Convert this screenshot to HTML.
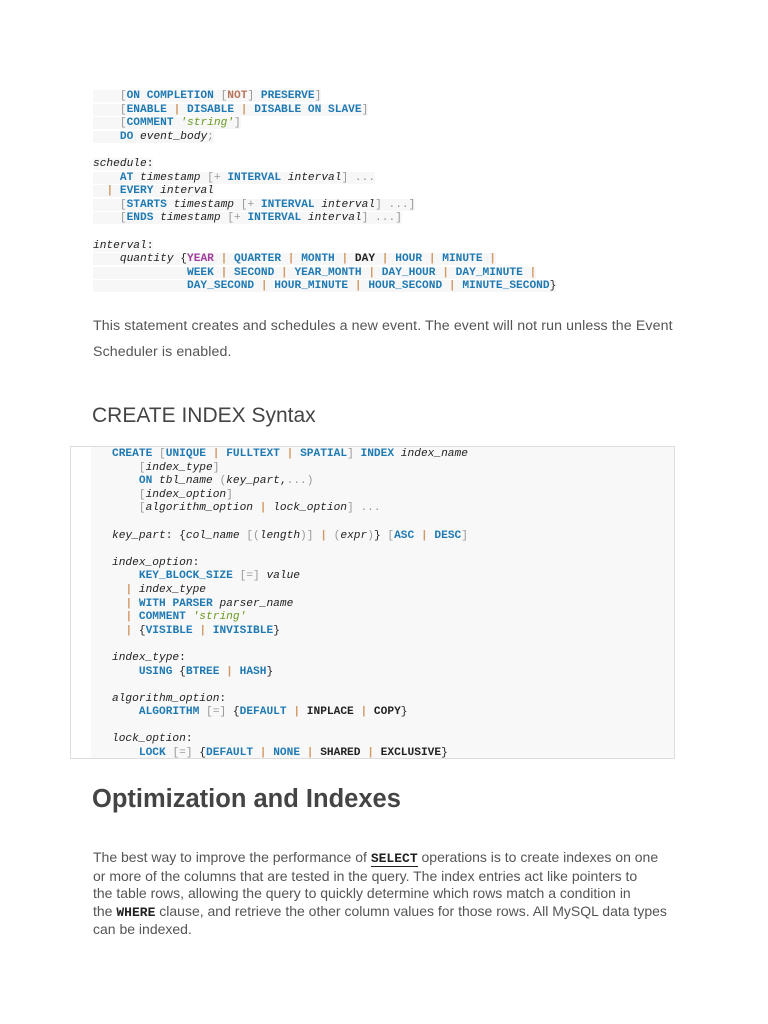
<!DOCTYPE html>
<html><head><meta charset="utf-8"><style>
body{margin:0;background:#fff;width:768px;height:1024px;position:relative;overflow:hidden;font-family:"Liberation Sans",sans-serif;}
pre{margin:0;position:absolute;font-family:"Liberation Mono",monospace;font-size:11.2px;line-height:13.6px;color:#222;}
.b1 span.l{background:#f7f7f7;}
.k{color:#1f7ab3;font-weight:bold}
.g{color:#999}
.p{color:#d19a66;font-weight:bold}
.s{color:#6a9a1f;font-style:italic}
.pu{color:#a03c9c;font-weight:bold}
.n{color:#b7765a;font-weight:bold}
.i{font-style:italic;color:#222}
.d{color:#222;font-weight:bold}
.t{position:absolute;left:93px;color:#555;font-size:14.2px;white-space:nowrap;letter-spacing:0.1px}
</style></head><body>
<pre class="b1" style="left:93px;top:90px"><span class="l">    <span class="g">[</span><span class="k">ON COMPLETION</span> <span class="g">[</span><span class="n">NOT</span><span class="g">]</span> <span class="k">PRESERVE</span><span class="g">]</span></span>
<span class="l">    <span class="g">[</span><span class="k">ENABLE</span> <span class="p">|</span> <span class="k">DISABLE</span> <span class="p">|</span> <span class="k">DISABLE ON SLAVE</span><span class="g">]</span></span>
<span class="l">    <span class="g">[</span><span class="k">COMMENT</span> <span class="s">'string'</span><span class="g">]</span></span>
<span class="l">    <span class="k">DO</span> <span class="i">event_body</span><span class="g">;</span></span>

<span class="l"><span class="i">schedule</span>:</span>
<span class="l">    <span class="k">AT</span> <span class="i">timestamp</span> <span class="g">[+</span> <span class="k">INTERVAL</span> <span class="i">interval</span><span class="g">] ...</span></span>
<span class="l">  <span class="p">|</span> <span class="k">EVERY</span> <span class="i">interval</span></span>
<span class="l">    <span class="g">[</span><span class="k">STARTS</span> <span class="i">timestamp</span> <span class="g">[+</span> <span class="k">INTERVAL</span> <span class="i">interval</span><span class="g">] ...]</span></span>
<span class="l">    <span class="g">[</span><span class="k">ENDS</span> <span class="i">timestamp</span> <span class="g">[+</span> <span class="k">INTERVAL</span> <span class="i">interval</span><span class="g">] ...]</span></span>

<span class="l"><span class="i">interval</span>:</span>
<span class="l">    <span class="i">quantity</span> {<span class="pu">YEAR</span> <span class="p">|</span> <span class="k">QUARTER</span> <span class="p">|</span> <span class="k">MONTH</span> <span class="p">|</span> <span class="d">DAY</span> <span class="p">|</span> <span class="k">HOUR</span> <span class="p">|</span> <span class="k">MINUTE</span> <span class="p">|</span></span>
<span class="l">              <span class="k">WEEK</span> <span class="p">|</span> <span class="k">SECOND</span> <span class="p">|</span> <span class="k">YEAR_MONTH</span> <span class="p">|</span> <span class="k">DAY_HOUR</span> <span class="p">|</span> <span class="k">DAY_MINUTE</span> <span class="p">|</span></span>
<span class="l">              <span class="k">DAY_SECOND</span> <span class="p">|</span> <span class="k">HOUR_MINUTE</span> <span class="p">|</span> <span class="k">HOUR_SECOND</span> <span class="p">|</span> <span class="k">MINUTE_SECOND</span>}</span></pre>

<div class="t" style="top:318px;">This statement creates and schedules a new event. The event will not run unless the Event</div>
<div class="t" style="top:344px;">Scheduler is enabled.</div>

<div style="position:absolute;left:92px;top:404px;font-size:21px;color:#444;">CREATE INDEX Syntax</div>

<div style="position:absolute;left:70px;top:446px;width:603px;height:311px;border:1px solid #ddd;background:#fff;">
<div style="position:absolute;left:20px;top:0;right:0;bottom:0;background:#f8f8f8;"></div>
</div>
<pre style="left:112px;top:448px"><span class="k">CREATE</span> <span class="g">[</span><span class="k">UNIQUE</span> <span class="p">|</span> <span class="k">FULLTEXT</span> <span class="p">|</span> <span class="k">SPATIAL</span><span class="g">]</span> <span class="k">INDEX</span> <span class="i">index_name</span>
    <span class="g">[</span><span class="i">index_type</span><span class="g">]</span>
    <span class="k">ON</span> <span class="i">tbl_name</span> <span class="g">(</span><span class="i">key_part</span>,<span class="g">...)</span>
    <span class="g">[</span><span class="i">index_option</span><span class="g">]</span>
    <span class="g">[</span><span class="i">algorithm_option</span> <span class="p">|</span> <span class="i">lock_option</span><span class="g">] ...</span>

<span class="i">key_part</span>: {<span class="i">col_name</span> <span class="g">[(</span><span class="i">length</span><span class="g">)]</span> <span class="p">|</span> <span class="g">(</span><span class="i">expr</span><span class="g">)</span>} <span class="g">[</span><span class="k">ASC</span> <span class="p">|</span> <span class="k">DESC</span><span class="g">]</span>

<span class="i">index_option</span>:
    <span class="k">KEY_BLOCK_SIZE</span> <span class="g">[=]</span> <span class="i">value</span>
  <span class="p">|</span> <span class="i">index_type</span>
  <span class="p">|</span> <span class="k">WITH PARSER</span> <span class="i">parser_name</span>
  <span class="p">|</span> <span class="k">COMMENT</span> <span class="s">'string'</span>
  <span class="p">|</span> {<span class="k">VISIBLE</span> <span class="p">|</span> <span class="k">INVISIBLE</span>}

<span class="i">index_type</span>:
    <span class="k">USING</span> {<span class="k">BTREE</span> <span class="p">|</span> <span class="k">HASH</span>}

<span class="i">algorithm_option</span>:
    <span class="k">ALGORITHM</span> <span class="g">[=]</span> {<span class="k">DEFAULT</span> <span class="p">|</span> <span class="d">INPLACE</span> <span class="p">|</span> <span class="d">COPY</span>}

<span class="i">lock_option</span>:
    <span class="k">LOCK</span> <span class="g">[=]</span> {<span class="k">DEFAULT</span> <span class="p">|</span> <span class="k">NONE</span> <span class="p">|</span> <span class="d">SHARED</span> <span class="p">|</span> <span class="d">EXCLUSIVE</span>}</pre>

<div style="position:absolute;left:92px;top:785px;font-size:25.5px;font-weight:bold;color:#444;">Optimization and Indexes</div>

<div style="position:absolute;left:93px;top:849px;color:#555;font-size:14px;line-height:17.5px;white-space:nowrap;">
The best way to improve the performance of <span style="font-family:'Liberation Mono',monospace;color:#222;font-weight:bold;border-bottom:1px solid #222;font-size:13px;">SELECT</span> operations is to create indexes on one<br>
or more of the columns that are tested in the query. The index entries act like pointers to<br>
the table rows, allowing the query to quickly determine which rows match a condition in<br>
the <span style="font-family:'Liberation Mono',monospace;color:#222;font-weight:bold;font-size:13px;">WHERE</span> clause, and retrieve the other column values for those rows. All MySQL data types<br>
can be indexed.
</div>
</body></html>
